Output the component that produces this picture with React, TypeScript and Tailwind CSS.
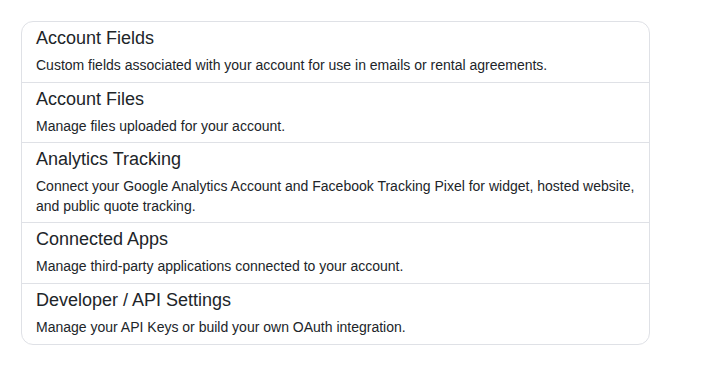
const items = [
  {
    title: "Account Fields",
    description: "Custom fields associated with your account for use in emails or rental agreements.",
  },
  {
    title: "Account Files",
    description: "Manage files uploaded for your account.",
  },
  {
    title: "Analytics Tracking",
    description:
      "Connect your Google Analytics Account and Facebook Tracking Pixel for widget, hosted website, and public quote tracking.",
  },
  {
    title: "Connected Apps",
    description: "Manage third-party applications connected to your account.",
  },
  {
    title: "Developer / API Settings",
    description: "Manage your API Keys or build your own OAuth integration.",
  },
];

export default function App() {
  return (
    <div className="min-h-screen bg-white pl-[21px] pt-[21px] font-['Liberation_Sans',Arial,sans-serif] text-[#212529]">
      <div className="w-[629px] overflow-hidden rounded-xl border border-[#dfe1e6] bg-white">
        {items.map((item, i) => (
          <a
            key={item.title}
            href="#"
            className={`block px-[14px] pt-[6px] pb-[6px] ${i > 0 ? "border-t border-[#dfe1e6]" : ""}`}
          >
            <div className="mb-[7px] text-[18px] leading-[21px]">{item.title}</div>
            <div className="text-[14px] leading-[19.6px]">{item.description}</div>
          </a>
        ))}
      </div>
    </div>
  );
}
